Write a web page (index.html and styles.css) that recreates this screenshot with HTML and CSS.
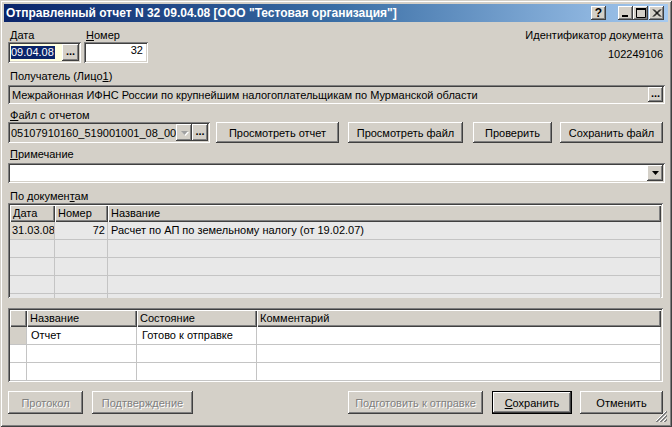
FILE: index.html
```html
<!DOCTYPE html>
<html lang="ru">
<head>
<meta charset="utf-8">
<title>Отправленный отчет</title>
<link rel="stylesheet" href="styles.css">
</head>
<body>
<div class="window">
  <div class="titlebar">
    <span class="title">Отправленный отчет N 32 09.04.08 [ООО "Тестовая организация"]</span>
    <span class="capbtn help">?</span>
    <span class="capbtn min"><svg width="15" height="14" viewBox="0 0 15 14"><rect x="4" y="9" width="6" height="2" fill="#000"/></svg></span>
    <span class="capbtn max"><svg width="15" height="14" viewBox="0 0 15 14"><path d="M3 2h9v9H3z" fill="none" stroke="#000" stroke-width="1" transform="translate(0.5 0.5)"/><rect x="3" y="2" width="10" height="2" fill="#000"/></svg></span>
    <span class="capbtn close"><svg width="15" height="14" viewBox="0 0 15 14"><path d="M4 3l7 7M5 3l7 7M11 3l-7 7M12 3l-7 7" stroke="#000" stroke-width="1" fill="none" transform="translate(0 0.5)"/></svg></span>
  </div>
  <div class="content">
    <div class="row-top">
      <div class="group">
        <div class="label"><u>Д</u>ата</div>
        <div class="sunken date-box">
          <div class="field-text date-text"><span class="sel">09.04.08</span></div>
          <span class="btn dots">...</span>
        </div>
      </div>
      <div class="group num-group">
        <div class="label"><u>Н</u>омер</div>
        <div class="sunken num-box">32</div>
      </div>
      <div class="ident">
        <div class="ident-label">Идентификатор документа</div>
        <div class="ident-num">102249106</div>
      </div>
    </div>

    <div class="label recip-label">Получатель (Лицо<u>1</u>)</div>
    <div class="sunken recip-box">
      <span class="field-text">Межрайонная ИФНС России по крупнейшим налогоплательщикам по Мурманской области</span>
      <span class="btn dots small">...</span>
    </div>

    <div class="label file-label"><u>Ф</u>айл с отчетом</div>
    <div class="file-row">
      <div class="sunken file-box">
        <span class="field-text">05107910160_519001001_08_00</span>
        <span class="btn arrow-btn disabled"><svg width="7" height="4" viewBox="0 0 7 4"><path d="M0 0h7L3.5 4z" fill="#a0a0a0"/></svg></span>
        <span class="btn dots file-dots">...</span>
      </div>
      <span class="btn push b-report">Просмотреть отчет</span>
      <span class="btn push b-file">Просмотреть файл</span>
      <span class="btn push b-check">Проверить</span>
      <span class="btn push b-save-file">Сохранить файл</span>
    </div>

    <div class="label note-label"><u>П</u>римечание</div>
    <div class="sunken note-box">
      <span class="field-text"></span>
      <span class="btn arrow-btn note-arrow"><svg width="7" height="4" viewBox="0 0 7 4"><path d="M0 0h7L3.5 4z" fill="#000"/></svg></span>
    </div>

    <div class="label docs-label">По докумен<u>т</u>ам</div>
    <div class="sunken grid grid-docs">
      <div class="g-head cols-docs">
        <div class="th">Дата</div>
        <div class="th">Номер</div>
        <div class="th">Название</div>
      </div>
      <div class="g-body cols-docs">
        <div class="td cur">31.03.08</div>
        <div class="td num">72</div>
        <div class="td">Расчет по АП по земельному налогу (от 19.02.07)</div>
        <div class="td"></div><div class="td"></div><div class="td"></div>
        <div class="td"></div><div class="td"></div><div class="td"></div>
        <div class="td"></div><div class="td"></div><div class="td"></div>
        <div class="td"></div><div class="td"></div><div class="td"></div>
      </div>
    </div>

    <div class="sunken grid grid-files">
      <div class="g-head cols-files">
        <div class="th"></div>
        <div class="th">Название</div>
        <div class="th">Состояние</div>
        <div class="th">Комментарий</div>
      </div>
      <div class="g-body cols-files">
        <div class="td ind cur-ind"></div>
        <div class="td">Отчет</div>
        <div class="td">Готово к отправке</div>
        <div class="td"></div>
        <div class="td ind"></div><div class="td"></div><div class="td"></div><div class="td"></div>
        <div class="td ind"></div><div class="td"></div><div class="td"></div><div class="td"></div>
      </div>
    </div>

    <div class="bottom-row">
      <span class="btn push big disabled-text b-proto">Протокол</span>
      <span class="btn push big disabled-text b-confirm">Подтверждение</span>
      <span class="btn push big disabled-text b-prepare">Подготовить к отправке</span>
      <span class="btn push big default b-save"><u>С</u>охранить</span>
      <span class="btn push big b-cancel">Отменить</span>
    </div>
  </div>
  <svg class="grip" width="12" height="12" viewBox="0 0 12 12">
    <path d="M11 0L0 11M11 4L4 11M11 8L8 11" stroke="#808080" stroke-width="1"/>
    <path d="M11 1L1 11M11 5L5 11M11 9L9 11" stroke="#808080" stroke-width="1"/>
    <path d="M10 0L-1 11M10 4L3 11M10 8L7 11" stroke="#fff" stroke-width="1"/>
  </svg>
</div>
</body>
</html>
```

FILE: styles.css
```css
html, body {
  margin: 0;
  padding: 0;
}
body {
  width: 672px;
  height: 427px;
  overflow: hidden;
  background: #d4d0c8;
  font-family: "Liberation Sans", Arial, sans-serif;
  font-size: 11px;
  color: #000;
}
* { box-sizing: border-box; }

.window {
  position: relative;
  width: 672px;
  height: 427px;
  padding: 4px;
  background: #d4d0c8;
  box-shadow: inset 1px 1px #d4d0c8, inset -1px -1px #404040, inset 2px 2px #fff, inset -2px -2px #808080;
  display: flex;
  flex-direction: column;
}

.titlebar {
  height: 18px;
  flex: none;
  display: flex;
  align-items: center;
  padding: 0 4px 0 2px;
  background: linear-gradient(to right, #0a246a 0%, #3a6ea5 50%, #a6caf0 100%);
}
.title {
  flex: 1;
  color: #fff;
  font-weight: bold;
  font-size: 12px;
  white-space: nowrap;
  overflow: hidden;
}
.capbtn {
  width: 15px;
  height: 14px;
  flex: none;
  background: #d4d0c8;
  box-shadow: inset -1px -1px #404040, inset 1px 1px #fff, inset -2px -2px #808080;
  display: flex;
  align-items: center;
  justify-content: center;
}
.capbtn svg { display: block; }
.help {
  margin-right: 12px;
  font-weight: bold;
  font-size: 12px;
  line-height: 14px;
}
.close { margin-left: 1px; }

.content {
  flex: 1;
  display: flex;
  flex-direction: column;
  padding: 0 3px 0 4px;
}

.label {
  line-height: 13px;
  height: 13px;
  padding-left: 2px;
  white-space: nowrap;
}
u { text-decoration: underline; text-underline-offset: 1px; }

.sunken {
  box-shadow: inset 1px 1px #808080, inset -1px -1px #fff, inset 2px 2px #404040, inset -2px -2px #d4d0c8;
  padding: 2px;
}

.btn {
  background: #d4d0c8;
  box-shadow: inset -1px -1px #404040, inset 1px 1px #fff, inset -2px -2px #808080;
  display: flex;
  align-items: center;
  justify-content: center;
  white-space: nowrap;
  flex: none;
}
.dots {
  font-weight: bold;
  font-size: 11px;
  line-height: 11px;
  align-items: flex-end;
  padding-bottom: 4px;
  letter-spacing: 0;
}

.field-text {
  flex: 1;
  min-width: 0;
  overflow: hidden;
  white-space: nowrap;
  display: flex;
  align-items: center;
}

/* top row */
.row-top {
  margin-top: 7px;
  display: flex;
  height: 34px;
}
.group { display: flex; flex-direction: column; }
.date-box {
  width: 73px;
  height: 21px;
  display: flex;
  background: #ffffe1;
}
.date-text { padding-left: 1px; }
.sel {
  background: #0a246a;
  color: #fff;
  line-height: 13px;
  height: 13px;
  padding: 0 1px 0 0;
}
.date-box .dots {
  width: 17px;
  height: 17px;
}
.num-group { margin-left: 3px; }
.num-box {
  width: 64px;
  height: 21px;
  background: #fff;
  text-align: right;
  padding: 0 5px 0 2px;
  line-height: 17px;
}
.ident {
  margin-left: auto;
  padding-right: 2px;
  text-align: right;
}
.ident-label { line-height: 13px; }
.ident-num { line-height: 13px; margin-top: 6px; }

/* recipient */
.recip-label { margin-top: 7px; }
.recip-box {
  margin-top: 2px;
  height: 19px;
  display: flex;
  align-items: center;
  padding-left: 4px;
}
.dots.small {
  width: 15px;
  height: 15px;
  padding-bottom: 3px;
}

/* file row */
.file-label { margin-top: 5px; }
.file-row {
  display: flex;
  height: 21px;
}
.file-box {
  width: 202px;
  height: 21px;
  display: flex;
  padding-left: 3px;
}
.arrow-btn {
  width: 16px;
  height: 17px;
}
.arrow-btn.disabled svg { filter: drop-shadow(1px 1px 0 #fff); }
.file-dots {
  width: 16px;
  height: 17px;
}
.push { height: 21px; }
.b-report { width: 123px; margin-left: 6px; }
.b-file { width: 115px; margin-left: 9px; }
.b-check { width: 79px; margin-left: 10px; }
.b-save-file { width: 103px; margin-left: 8px; }

/* note */
.note-label { margin-top: 5px; }
.note-box {
  margin-top: 2px;
  height: 20px;
  display: flex;
  background: #fff;
}
.note-arrow { height: 16px; }

/* grids */
.docs-label { margin-top: 7px; }
.grid {
  margin-right: 2px;
  overflow: hidden;
  display: flex;
  flex-direction: column;
}
.grid-docs { height: 95px; background: #e8e8e8; }
.grid-files { height: 74px; margin-top: 10px; background: #fff; }

.g-head, .g-body { display: grid; }
.g-head { grid-auto-rows: 17px; flex: none; }
.g-body { grid-auto-rows: 18px; }
.cols-docs { grid-template-columns: 45px 53px 1fr; }
.cols-files { grid-template-columns: 17px 110px 120px 1fr; }

.th {
  background: #d4d0c8;
  box-shadow: inset 1px 1px #fff, inset -1px -1px #404040, inset -2px -2px #808080;
  line-height: 16px;
  padding-left: 3px;
  white-space: nowrap;
  overflow: hidden;
}
.td {
  border-right: 1px solid #c4c4c4;
  border-bottom: 1px solid #c4c4c4;
  line-height: 17px;
  padding: 0 2px 0 3px;
  white-space: nowrap;
  overflow: hidden;
}
.grid-docs .td { background: #e8e8e8; }
.grid-docs .td.cur { background: #dedad3; padding-left: 2px; }
.td.num { text-align: right; padding-right: 2px; }
.grid-files .td { background: #fff; }
.grid-files .td:nth-child(4n+2) { padding-left: 4px; }
.grid-files .td:nth-child(4n+3) { padding-left: 5px; }
.grid-files .td.cur-ind { background: #d4d0c8; }
.grid-files .td.ind { border-right-color: #c4c4c4; }

/* bottom buttons */
.bottom-row {
  margin-top: 9px;
  display: flex;
  height: 23px;
}
.big { height: 23px; }
.disabled-text {
  color: #808080;
  text-shadow: 1px 1px 0 #fff;
}
.b-proto { width: 75px; }
.b-confirm { width: 101px; margin-left: 9px; }
.b-prepare { width: 135px; margin-left: auto; }
.b-save { width: 80px; margin-left: 9px; }
.b-cancel { width: 83px; margin-left: 8px; margin-right: 2px; }
.default {
  box-shadow: inset 0 0 0 1px #000, inset -2px -2px #404040, inset 2px 2px #fff, inset -3px -3px #808080;
}

.grip {
  position: absolute;
  right: 4px;
  bottom: 4px;
}
```
